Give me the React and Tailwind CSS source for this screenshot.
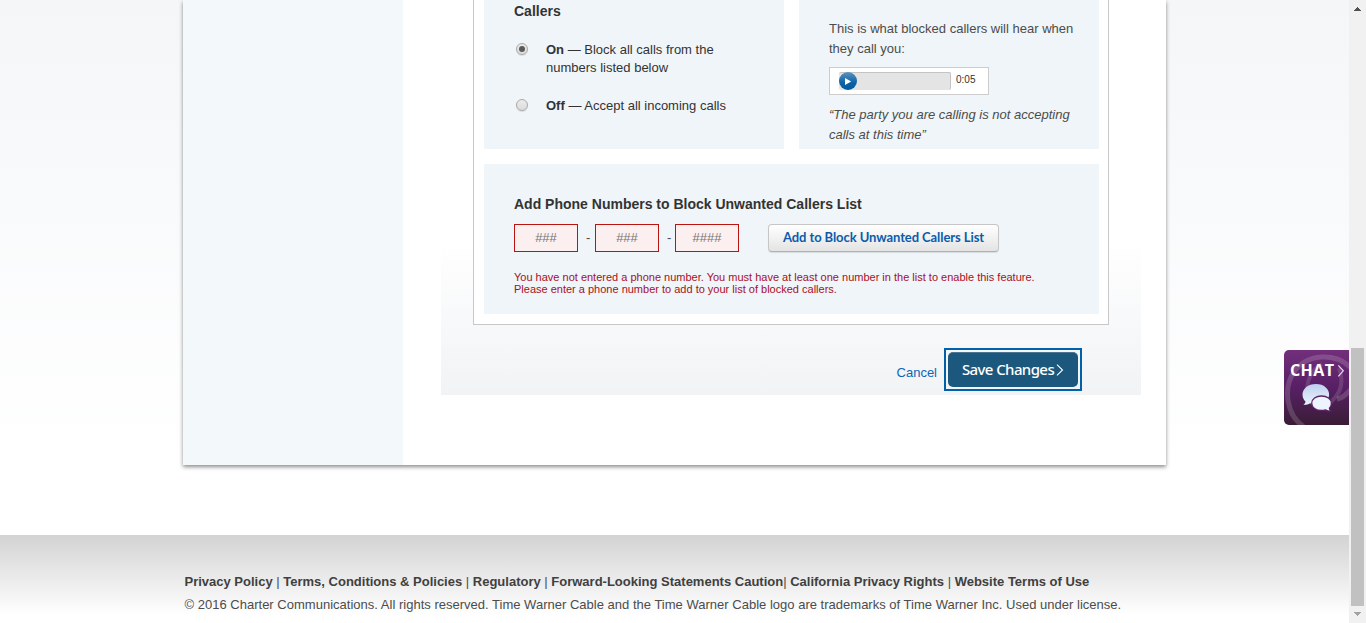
const footerLinks = [
  ["Privacy Policy", " | "],
  ["Terms, Conditions & Policies", " | "],
  ["Regulatory", " | "],
  ["Forward-Looking Statements Caution", "| "],
  ["California Privacy Rights", " | "],
  ["Website Terms of Use", ""],
];

function Radio({ checked }) {
  return (
    <span className="mt-0.5 flex size-3 shrink-0 items-center justify-center rounded-full border border-[#a9a9a9] bg-linear-to-b from-[#ebebeb] to-[#dcdcdc] shadow-[0_1px_1px_rgba(0,0,0,0.1)]">
      {checked && <span className="size-1.5 rounded-full bg-[#5a5a5a]" />}
    </span>
  );
}

function Option({ checked, label, children }) {
  return (
    <label className="flex gap-x-[18px] pl-0.5 leading-[18px] text-[#333]">
      <Radio checked={checked} />
      <span className="whitespace-nowrap">
        <b>{label}</b> — {children}
      </span>
    </label>
  );
}

function PhoneField({ hint }) {
  return (
    <input
      placeholder={hint}
      className="h-7 w-16 border border-[#b9140f] bg-[#fcefef] pb-px text-center text-[13px] text-[#333] outline-none placeholder:text-[#757575]"
    />
  );
}

function AudioPlayer() {
  return (
    <div className="flex h-7 w-40 border border-[#ccc] bg-white pl-[9px] pt-1">
      <div className="h-[18px] w-28 rounded-xs border-t border-r border-[#c4c4c4] bg-[#e4e4e4]">
        <svg className="-mt-px block size-[18px]" viewBox="0 0 18 18">
          <defs>
            <linearGradient id="play" x1="0" y1="0" x2="0" y2="1">
              <stop offset="0" stopColor="#5b93c0" />
              <stop offset="0.6" stopColor="#0d62a5" />
              <stop offset="1" stopColor="#0059a3" />
            </linearGradient>
          </defs>
          <circle cx="9" cy="9" r="9" fill="url(#play)" />
          <path d="M6 6l6.2 3.5L6 13z" fill="#fff" />
        </svg>
      </div>
      <span className="ml-[5px] mt-px text-[10px] leading-[14px] text-[#333]">0:05</span>
    </div>
  );
}

function ChatTab() {
  return (
    <button className="absolute top-[350px] right-0 block h-[75px] w-[65px] overflow-hidden rounded-l-[5px] bg-linear-to-b from-[#722f7b] via-[#581f65] to-[#3a1c36]">
      <svg className="absolute inset-0" width="65" height="75" viewBox="0 0 65 75" fill="none">
        <defs>
          <linearGradient id="bubble" x1="0" y1="0" x2="0" y2="1">
            <stop offset="0" stopColor="#bed0ee" />
            <stop offset="1" stopColor="#edf3fd" />
          </linearGradient>
        </defs>
        <g stroke="#fff" strokeOpacity="0.16" strokeWidth="5">
          <path d="M20 77C2 65 -1 38 10 22C22 4 52 1 68 19" />
          <path d="M38 14C24 22 20 38 26 50C30 58 40 59 47 52C57 43 60 31 55 18" strokeWidth="4" strokeOpacity="0.13" />
          <path d="M53 49C59 48 63 44 67 39" />
        </g>
        <path
          d="M32 34c-8 0-13.500 4.700-13.500 10.500 0 3 1.300 5.400 3 7-.3 1.700-1 2.800-2.200 3.500 3 .1 5-.6 6.800-1.700 2 .8 4 1.100 6 1.100 7.500 0 13-4.500 13-10S40 34 32 34z"
          fill="url(#bubble)"
        />
        <path
          d="M37.500 46c-5.500 0-9.800 3-9.800 7.200s4.200 7.300 9.700 7.300c1.400 0 2.700-.2 3.900-.6 1.500.9 3.200 1.400 5.500 1-.9-.7-1.300-1.600-1.400-2.700 1.300-1.300 2-3 2-4.900 0-4.200-4.400-7.300-9.900-7.300z"
          fill="#eef4fe"
          stroke="#592266"
          strokeWidth="1.300"
        />
        <path d="M54.300 15.300l5 5.500-5 5.500" stroke="#e8dcec" strokeWidth="1.200" />
      </svg>
      <span className="absolute top-2.5 left-1.5 font-['Open_Sans',sans-serif] text-base leading-5 font-bold tracking-[0.4px] text-white">
        CHAT
      </span>
    </button>
  );
}

function Scrollbar() {
  return (
    <div className="flex h-full w-[17px] shrink-0 flex-col items-center bg-[#f1f1f1]">
      <svg className="block h-[17px] w-[17px]" viewBox="0 0 17 17" shapeRendering="crispEdges">
        <path d="M8 7h1v1h1v1h1v1h1v1H5v-1h1V9h1V8h1z" fill="#505050" />
      </svg>
      <div className="mt-[331px] h-[258px] w-[13px] bg-[#c1c1c1]" />
      <svg className="block h-[17px] w-[17px]" viewBox="0 0 17 17" shapeRendering="crispEdges">
        <path d="M5 6h7v1h-1v1h-1v1H9v1H8V9H7V8H6V7H5z" fill="#a3a3a3" />
      </svg>
    </div>
  );
}

export default function App() {
  return (
    <div className="flex h-[623px] w-[1366px] overflow-hidden bg-white font-['Liberation_Sans',Arial,sans-serif] text-[13px]">
      <div className="relative flex w-[1349px] shrink-0 flex-col">
        <main className="h-[535px] bg-linear-to-b from-[#f4f6f8] to-white to-[465px] pl-[183px]">
          <div className="flex h-[465px] w-[983px] bg-white shadow-[0_2px_4px_rgba(0,0,0,0.45)]">
            <aside className="w-[220px] bg-[#f3f8fb]" />
            <div className="ml-[38px] h-[395px] w-[700px] bg-linear-to-b from-white from-[240px] to-[#f1f3f5] px-8">
              <section className="h-[325px] w-[636px] border-x border-b border-[#c8c8c8] bg-white pl-2.5">
                <div className="flex gap-[15px]">
                  <div className="h-[149px] w-[300px] shrink-0 bg-[#eff5f8] pt-px pl-[30px]">
                    <h2 className="text-sm font-bold text-[#333]">Callers</h2>
                    <div className="mt-5 flex flex-col gap-5">
                      <Option checked label="On">
                        Block all calls from the
                        <br />
                        numbers listed below
                      </Option>
                      <Option label="Off">Accept all incoming calls</Option>
                    </div>
                  </div>
                  <div className="h-[149px] w-[300px] shrink-0 bg-[#eff5f8] pt-[19px] pl-[30px] leading-5 whitespace-nowrap text-[#4c4c4c]">
                    <p className="mb-2">
                      This is what blocked callers will hear when
                      <br />
                      they call you:
                    </p>
                    <AudioPlayer />
                    <p className="mt-2.5 italic">
                      “The party you are calling is not accepting
                      <br />
                      calls at this time”
                    </p>
                  </div>
                </div>
                <div className="mt-[15px] h-[150px] w-[615px] bg-[#eff5f8] pt-[30px] pl-[30px]">
                  <h2 className="text-sm font-bold text-[#333]">
                    Add Phone Numbers to Block Unwanted Callers List
                  </h2>
                  <div className="mt-2.5 flex items-center text-[#4c4c4c]">
                    <PhoneField hint="###" />
                    <span className="w-[17px] pl-2">-</span>
                    <PhoneField hint="###" />
                    <span className="w-4 pl-2">-</span>
                    <PhoneField hint="####" />
                    <button className="ml-[29px] h-7 w-[231px] rounded-[4px] border border-[#c6c6c6] border-b-[#b0b0b0] bg-linear-to-b from-white to-[#e4e4e4] font-['Lato',sans-serif] text-[13px] font-bold tracking-[-0.08px] whitespace-nowrap text-[#0b5cab] shadow-[0_1px_1px_rgba(0,0,0,0.1)]">
                      Add to Block Unwanted Callers List
                    </button>
                  </div>
                  <p className="mt-[19px] text-[11px] leading-3 whitespace-nowrap text-[#a90f1e]">
                    You have not entered a phone number. You must have at least one number in the list to enable this feature.
                    <br />
                    Please enter a phone number to add to your list of blocked callers.
                  </p>
                </div>
              </section>
              <div className="mt-[23px] flex items-center justify-end gap-[7px] pr-[27px]">
                <a className="mt-1.5 text-[#0b66b8]">Cancel</a>
                <div className="h-[43px] w-[138px] border-2 border-[#0060aa] p-0.5">
                  <button className="flex h-[35px] w-[130px] items-center justify-center rounded-[5px] border-t border-[#4a7694] bg-[#1c587e] pb-px font-['Noto_Sans',sans-serif] text-[15px] font-medium tracking-[-0.6px] whitespace-nowrap text-white">
                    Save Changes
                    <svg className="mt-px ml-0.5" width="8" height="12" viewBox="0 0 8 12" fill="none">
                      <path d="M1 .7l5.500 5.300L1 11.300" stroke="#fff" strokeWidth="1.100" />
                    </svg>
                  </button>
                </div>
              </div>
            </div>
          </div>
        </main>
        <footer className="h-[88px] bg-linear-to-b from-[#d3d3d3] to-white to-[80px] pt-[37px] pl-[184.5px] whitespace-pre text-[#4c4c4c]">
          <p className="leading-5">
            {footerLinks.map(([name, sep]) => (
              <span key={name}>
                <b className="text-[#404040]">{name}</b>
                {sep}
              </span>
            ))}
          </p>
          <p className="mt-[3px] leading-5 tracking-[0.01px]">
            © 2016 Charter Communications. All rights reserved. Time Warner Cable and the Time Warner Cable logo are trademarks of Time Warner Inc. Used under license.
          </p>
        </footer>
        <ChatTab />
      </div>
      <Scrollbar />
    </div>
  );
}
